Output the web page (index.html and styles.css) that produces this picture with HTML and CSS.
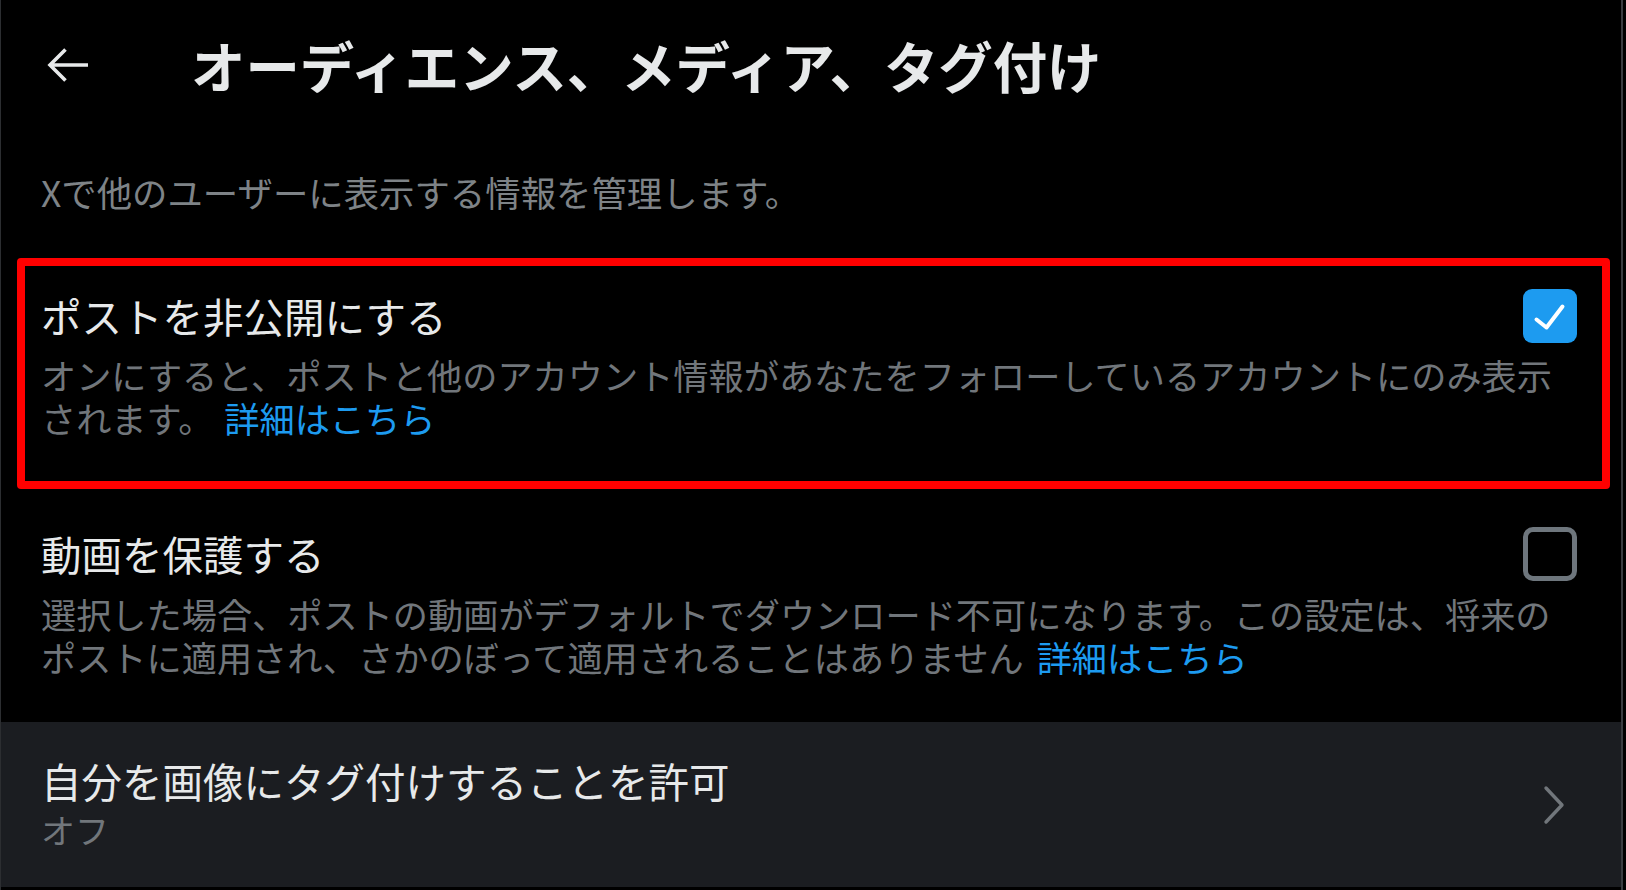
FILE: index.html
```html
<!DOCTYPE html>
<html lang="ja">
<head>
<meta charset="utf-8">
<title>オーディエンス、メディア、タグ付け</title>
<link rel="stylesheet" href="styles.css">
</head>
<body>
<div class="screen">
  <header class="topbar">
    <button class="back" aria-label="戻る">
      <svg viewBox="0 0 42 36" width="42" height="36"><path d="M3 18 H41 M18.5 2.5 L3 18 L18.5 33.5" fill="none" stroke="#e7e9ea" stroke-width="3.6" stroke-linejoin="miter" stroke-linecap="butt"/></svg>
    </button>
    <h1 class="title">オーディエンス、メディア、タグ付け</h1>
  </header>

  <p class="intro">Xで他のユーザーに表示する情報を管理します。</p>

  <section class="setting highlight">
    <div class="setting-title">ポストを非公開にする</div>
    <span class="check on">
      <svg viewBox="0 0 54 54" width="54" height="54"><path d="M13.5 30.5 L23.5 38.5 L39.5 17.5" fill="none" stroke="#fff" stroke-width="4" stroke-linecap="round" stroke-linejoin="round"/></svg>
    </span>
    <p class="setting-desc">オンにすると、ポストと他のアカウント情報があなたをフォローしているアカウントにのみ表示されます。 <a class="more" href="#">詳細はこちら</a></p>
  </section>

  <section class="setting plain">
    <div class="setting-title">動画を保護する</div>
    <span class="check off"></span>
    <p class="setting-desc">選択した場合、ポストの動画がデフォルトでダウンロード不可になります。この設定は、将来のポストに適用され、さかのぼって適用されることはありません <a class="more" href="#">詳細はこちら</a></p>
  </section>

  <a class="nav-row" href="#">
    <div class="nav-text">
      <div class="setting-title">自分を画像にタグ付けすることを許可</div>
      <div class="nav-value">オフ</div>
    </div>
    <svg class="chev" viewBox="0 0 24 40" width="24" height="40"><path d="M3 3 L19 20 L3 37" fill="none" stroke="#71767b" stroke-width="3.4" stroke-linecap="round" stroke-linejoin="round"/></svg>
  </a>
</div>
</body>
</html>
```

FILE: styles.css
```css
* { box-sizing: border-box; }

html, body {
  margin: 0;
  padding: 0;
  background: #000;
}

body {
  width: 1626px;
  height: 890px;
  overflow: hidden;
  font-family: "Noto Sans CJK JP", "Noto Sans", sans-serif;
  color: #e7e9ea;
}

.screen {
  width: 1623px;
  height: 890px;
  border-left: 1px solid #2c2e31;
  border-right: 2px solid #3a3d41;
  padding-bottom: 3px;
  display: flex;
  flex-direction: column;
}

.topbar {
  height: 130px;
  display: flex;
  align-items: center;
  padding-left: 46px;
}

.back {
  background: none;
  border: 0;
  padding: 0;
  width: 42px;
  height: 36px;
  display: flex;
  cursor: pointer;
}

.title {
  margin: 0 0 0 102px;
  font-size: 54.4px;
  font-weight: 700;
  line-height: 64px;
  letter-spacing: 0;
  color: #e7e9ea;
}

.intro {
  margin: 40px 0 0 0;
  padding-left: 40px;
  font-size: 35.4px;
  line-height: 44px;
  color: #7e8387;
}

.setting {
  display: grid;
  grid-template-columns: 1fr 54px;
  align-items: center;
}

.highlight {
  margin: 44px 11px 0 16px;
  border: 8px solid #ff0000;
  border-radius: 4px;
  padding: 23px 25px 42px 16px;
}

.plain {
  padding: 38px 44px 44px 40px;
}

.setting-title {
  font-size: 40.5px;
  line-height: 48px;
  color: #e7e9ea;
}

.setting-desc {
  grid-column: 1 / -1;
  margin: 10px 0 0 0;
  font-size: 35.2px;
  line-height: 43px;
  color: #71767b;
}

.plain .setting-desc {
  margin-top: 11px;
}

.more {
  margin-left: 3px;
  color: #1d9bf0;
  text-decoration: none;
}

.plain .more {
  margin-left: 5px;
}

.check {
  width: 54px;
  height: 54px;
  border-radius: 9px;
  display: block;
}

.check.on {
  background: #1d9bf0;
}

.check.on svg { display: block; }

.check.off {
  border: 5px solid #6e767d;
  border-radius: 10px;
}

.nav-row {
  flex: 1;
  display: flex;
  align-items: center;
  justify-content: space-between;
  background: #1b1d21;
  padding: 0 54px 0 40px;
  text-decoration: none;
}

.nav-text {
  padding-bottom: 2px;
}

.nav-value {
  margin-top: 3px;
  font-size: 34px;
  line-height: 43px;
  color: #71767b;
}

.chev { display: block; }
```
